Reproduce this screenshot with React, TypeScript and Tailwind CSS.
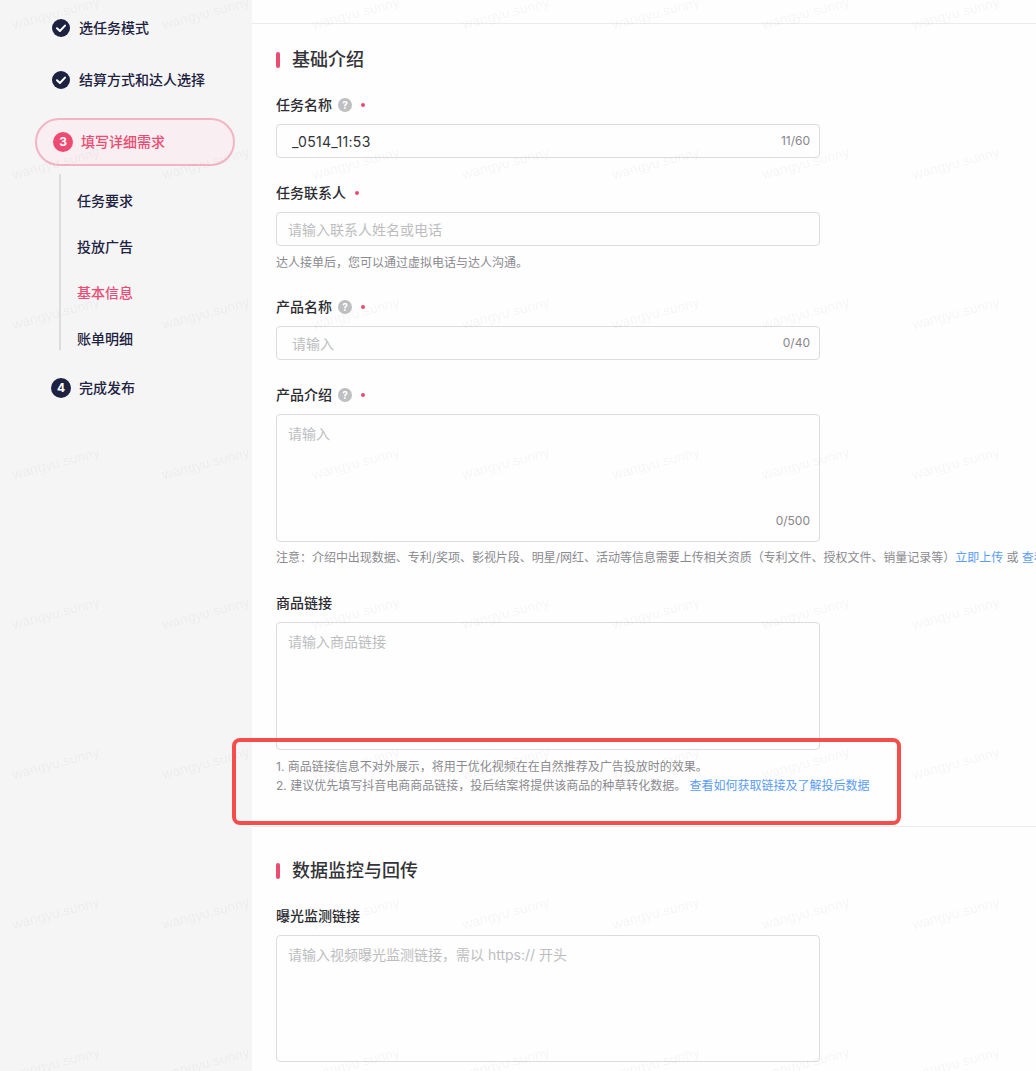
const FONT = "font-['Inter','Noto_Sans_CJK_SC',sans-serif]";

function CheckStep({ label }: { label: string }) {
  return (
    <div className="flex h-5 items-center gap-[9px] pl-[52px] text-sm font-medium text-[#1d2240]">
      <svg width="18" height="18" viewBox="0 0 18 18" className="-mt-px">
        <circle cx="9" cy="9" r="9" fill="#1d2240" />
        <path d="M5 9.3 L7.9 12 L13 6.6" fill="none" stroke="#fff" strokeWidth="2" strokeLinecap="round" strokeLinejoin="round" />
      </svg>
      <span>{label}</span>
    </div>
  );
}

function Sidebar() {
  return (
    <aside className="w-[252px] shrink-0 bg-[#f5f5f6] pt-[18px]">
      <CheckStep label="选任务模式" />
      <div className="mt-8">
        <CheckStep label="结算方式和达人选择" />
      </div>
      <div className="ml-[35px] mt-7 flex h-12 w-[200px] items-center gap-2 rounded-full border-2 border-[#f3b4c4] bg-[#f9eef1] pl-4 text-sm font-medium text-[#ee4b72]">
        <span className="flex h-5 w-5 items-center justify-center rounded-full bg-[#ee4b72] text-xs font-bold text-white">3</span>
        <span>填写详细需求</span>
      </div>
      <div className="ml-[59px] mt-2 flex h-[176px] flex-col gap-[26px] border-l-2 border-[#dddddf] pl-4 pt-[17px] text-sm font-medium text-[#1d2240]">
        <div className="h-5 leading-5">任务要求</div>
        <div className="h-5 leading-5">投放广告</div>
        <div className="h-5 leading-5 text-[#ee4b72]">基本信息</div>
        <div className="h-5 leading-5">账单明细</div>
      </div>
      <div className="mt-7 flex h-5 items-center gap-2 pl-[51px] text-sm font-medium text-[#1d2240]">
        <span className="flex h-5 w-5 items-center justify-center rounded-full bg-[#1d2240] text-xs font-bold text-white">4</span>
        <span>完成发布</span>
      </div>
    </aside>
  );
}

function SectionTitle({ title }: { title: string }) {
  return (
    <div className="flex h-[26px] items-center gap-3">
      <span className="h-4 w-1 rounded-sm bg-[#ee4b72]" />
      <h2 className="text-lg font-medium leading-[26px] text-[#333338]">{title}</h2>
    </div>
  );
}

function Label({ text, help, required, className = "" }: { text: string; help?: boolean; required?: boolean; className?: string }) {
  return (
    <div className={`flex h-5 items-center text-sm font-medium leading-5 text-[#2b2b30] ${className}`}>
      <span>{text}</span>
      {help && (
        <span className="ml-[6px] flex h-[14px] w-[14px] items-center justify-center rounded-full bg-[#bfbfc2] text-[10px] font-bold leading-none text-white">?</span>
      )}
      {required && <span className="ml-[9px] h-1 w-1 rounded-full bg-[#ee4b72]" />}
    </div>
  );
}

function Field({ placeholder, value, count, indent }: { placeholder?: string; value?: string; count?: string; indent?: boolean }) {
  return (
    <div className="relative mt-[9px] h-[34px] w-[544px]">
      <input
        readOnly
        defaultValue={value}
        placeholder={placeholder}
        className={`h-full w-full rounded border border-[#dcdce0] bg-transparent text-sm tracking-[0.3px] text-[#333338] outline-none placeholder:tracking-normal placeholder:text-[#bdbdc0] ${indent ? "pl-[15px]" : "pl-[11px]"}`}
      />
      {count && <span className="absolute right-[10px] top-[8px] text-xs leading-[18px] text-[#86868b]">{count}</span>}
    </div>
  );
}

function Area({ placeholder, count, height }: { placeholder: string; count?: string; height: string }) {
  return (
    <div className={`relative mt-[9px] w-[544px] ${height}`}>
      <textarea
        readOnly
        placeholder={placeholder}
        className="h-full w-full resize-none rounded border border-[#dcdce0] bg-transparent py-[9px] pl-[11px] pr-3 text-sm leading-5 outline-none placeholder:text-[#bdbdc0]"
      />
      {count && <span className="absolute bottom-[12px] right-[10px] text-xs leading-[18px] text-[#86868b]">{count}</span>}
    </div>
  );
}

function Main() {
  return (
    <main className="min-w-0 flex-1 bg-[#fefefe]">
      <div className="h-6 border-b border-[#ebebed]" />
      <div className="border-b border-[#ebebed] pb-[31px] pl-6 pt-[23px]">
        <SectionTitle title="基础介绍" />
        <Label text="任务名称" help required className="mt-[22px]" />
        <Field value="_0514_11:53" count="11/60" indent />
        <Label text="任务联系人" required className="mt-[25px]" />
        <Field placeholder="请输入联系人姓名或电话" />
        <p className="mt-2 text-xs leading-[18px] text-[#8a8a8f]">达人接单后，您可以通过虚拟电话与达人沟通。</p>
        <Label text="产品名称" help required className="mt-[25px]" />
        <Field placeholder="请输入" count="0/40" indent />
        <Label text="产品介绍" help required className="mt-[25px]" />
        <Area placeholder="请输入" count="0/500" height="h-[128px]" />
        <p className="mt-[7px] whitespace-nowrap text-xs leading-[18px] tracking-[-0.025px] text-[#8a8a8f]">
          注意：介绍中出现数据、专利/奖项、影视片段、明星/网红、活动等信息需要上传相关资质（专利文件、授权文件、销量记录等）
          <span className="text-[#5a9cf8]">立即上传</span> 或 <span className="text-[#5a9cf8]">查看示例</span>
        </p>
        <Label text="商品链接" className="mt-[26px]" />
        <Area placeholder="请输入商品链接" height="h-[128px]" />
        <div className="mt-[7px] text-xs leading-[19px] text-[#8a8a8f]">
          <p>1. 商品链接信息不对外展示，将用于优化视频在在自然推荐及广告投放时的效果。</p>
          <p>
            2. 建议优先填写抖音电商商品链接，投后结案将提供该商品的种草转化数据。 <span className="text-[#5a9cf8]">查看如何获取链接及了解投后数据</span>
          </p>
        </div>
      </div>
      <div className="pl-6 pt-[31px]">
        <SectionTitle title="数据监控与回传" />
        <Label text="曝光监测链接" className="mt-[22px]" />
        <Area placeholder="请输入视频曝光监测链接，需以 https:// 开头" height="h-[127px]" />
      </div>
    </main>
  );
}

function Watermarks() {
  const cells = Array.from({ length: 56 });
  return (
    <div className="pointer-events-none absolute inset-0 grid grid-cols-[repeat(7,150px)] grid-rows-[repeat(8,150px)] overflow-hidden">
      {cells.map((_, i) => (
        <div key={i} className="relative">
          <span className="absolute left-[11px] top-[3px] -rotate-[15deg] whitespace-nowrap font-['Liberation_Sans',sans-serif] text-sm leading-5 text-black/[0.055]">wangyu.sunny</span>
        </div>
      ))}
    </div>
  );
}

export default function App() {
  return (
    <div className={`relative flex h-[1071px] w-[1036px] overflow-hidden ${FONT}`}>
      <Sidebar />
      <Main />
      <Watermarks />
      <div className="pointer-events-none absolute left-[232px] top-[738px] h-[87px] w-[669px] rounded-lg border-4 border-[#f64c4c]" />
    </div>
  );
}
